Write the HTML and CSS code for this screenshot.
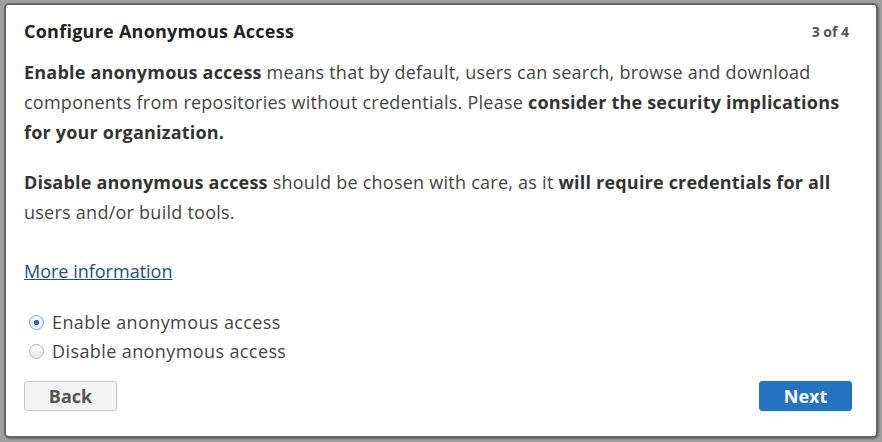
FILE: index.html
```html
<!DOCTYPE html>
<html lang="en">
<head>
  <meta charset="UTF-8">
  <title>Configure Anonymous Access</title>
  <link rel="stylesheet" href="styles.css">
</head>
<body>
  <div class="wizard">
    <div class="wizard-header">
      <h2>Configure Anonymous Access</h2>
      <span class="step">3 of 4</span>
    </div>
    <p><strong>Enable anonymous access</strong> means that by default, users can search, browse and download components from repositories without credentials. Please <strong>consider the security implications for your organization.</strong></p>
    <p><strong>Disable anonymous access</strong> should be chosen with care, as it <strong>will require credentials for all</strong> users and/or build tools.</p>
    <p class="more"><a href="#">More information</a></p>
    <div class="options">
      <label class="option"><input type="radio" name="anon" checked>Enable anonymous access</label>
      <label class="option"><input type="radio" name="anon">Disable anonymous access</label>
    </div>
    <div class="footer">
      <button class="btn">Back</button>
      <button class="btn btn-primary">Next</button>
    </div>
  </div>
</body>
</html>
```

FILE: styles.css
```css
html, body {
  height: 100%;
}
body {
  margin: 0;
  padding: 3px 4px 4px 4px;
  box-sizing: border-box;
  background-color: #9e9e9e;
  font-family: "Open Sans", sans-serif;
  color: #444;
}
.wizard {
  height: 100%;
  box-sizing: border-box;
  background-color: white;
  border: 2px solid #666;
  border-radius: 5px;
  padding: 14px 24px 24px 18px;
  box-shadow: 1px 1px 2px rgba(0, 0, 0, 0.3);
}
.wizard-header {
  display: flex;
  justify-content: space-between;
  align-items: center;
}
h2 {
  margin: 0;
  font-size: 18px;
  font-weight: 700;
  letter-spacing: 0.25px;
  color: #222;
}
.step {
  margin-right: 3px;
  font-size: 14px;
  font-weight: 700;
  color: #555;
}
p {
  margin: 14px 0 20px;
  font-size: 18px;
  line-height: 30px;
  letter-spacing: 0.25px;
}
strong {
  font-weight: 700;
  letter-spacing: 0.2px;
  color: #333;
}
.more {
  margin-top: 29px;
}
.more a {
  color: #1b4f82;
  letter-spacing: 0;
}
.options {
  display: flex;
  flex-direction: column;
  margin-top: 22px;
}
.option {
  display: flex;
  align-items: center;
  font-size: 18px;
  line-height: 29px;
  letter-spacing: 0.4px;
}
.option input {
  appearance: none;
  width: 15px;
  height: 15px;
  margin: 0 8px 0 5px;
  border: 1px solid #b5b5b5;
  border-radius: 50%;
  background: linear-gradient(#ffffff, #e6e6e6);
}
.option input:checked {
  border-color: #7ba4d4;
  background: radial-gradient(circle, #2f6db5 0, #2f6db5 2.5px, #eef4fb 3px);
}
.footer {
  display: flex;
  justify-content: space-between;
  margin-top: 15px;
}
.btn {
  width: 93px;
  height: 30px;
  font-family: inherit;
  font-size: 18px;
  font-weight: 700;
  color: #555;
  background-color: #f3f3f3;
  border: 1px solid #c8c8c8;
  border-radius: 3px;
}
.btn-primary {
  background-color: #2574c3;
  border-color: #2574c3;
  color: white;
}
```
